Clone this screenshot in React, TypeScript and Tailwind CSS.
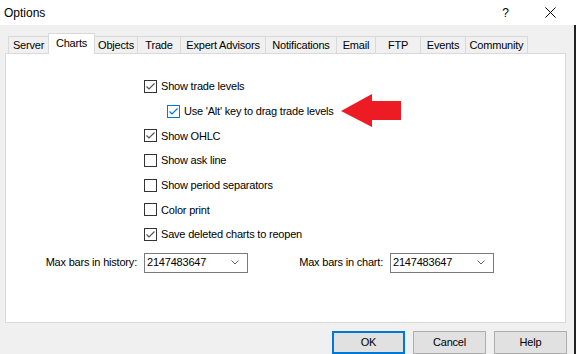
import React from "react";

const tabs = [
  { label: "Server", w: "w-[41px]" },
  { label: "Charts", w: "w-[47px]", active: true },
  { label: "Objects", w: "w-[44px]" },
  { label: "Trade", w: "w-[44px]" },
  { label: "Expert Advisors", w: "w-[86px]" },
  { label: "Notifications", w: "w-[72px]" },
  { label: "Email", w: "w-[40px]" },
  { label: "FTP", w: "w-[46px]" },
  { label: "Events", w: "w-[46px]" },
  { label: "Community", w: "w-[63px]" },
];

const options = [
  { label: "Show trade levels", checked: true },
  { label: "Use 'Alt' key to drag trade levels", checked: true, indent: true, focus: true },
  { label: "Show OHLC", checked: true },
  { label: "Show ask line", checked: false },
  { label: "Show period separators", checked: false },
  { label: "Color print", checked: false },
  { label: "Save deleted charts to reopen", checked: true },
];

function CheckBox({ checked, focus }: { checked: boolean; focus?: boolean }) {
  return (
    <div
      className={`w-[13px] h-[13px] shrink-0 bg-white border ${
        focus ? "border-[#0078d7]" : "border-[#333333]"
      }`}
    >
      {checked && (
        <svg width="11" height="11" viewBox="0 0 11 11">
          <polyline
            points="1.5,5.5 4,8 9.5,2.5"
            fill="none"
            stroke={focus ? "#0078d7" : "#555555"}
            strokeWidth="1.2"
          />
        </svg>
      )}
    </div>
  );
}

function Combo({ value }: { value: string }) {
  return (
    <div className="w-[104px] h-[20px] bg-white border border-[#7a7a7a] flex items-center pl-[2px] pr-[8px]">
      <span className="flex-1">{value}</span>
      <svg width="8" height="5" viewBox="0 0 8 5">
        <polyline points="0.5,0.5 4,4 7.5,0.5" fill="none" stroke="#606060" strokeWidth="1" />
      </svg>
    </div>
  );
}

export default function App() {
  return (
    <div className="w-[576px] h-[354px] overflow-hidden bg-[#f0f0f0] relative text-[11px] text-black font-['Liberation_Sans',Arial,sans-serif]">
      {/* Title bar */}
      <div className="h-[25px] bg-white flex items-center">
        <span className="pl-[4px] text-[12px]">Options</span>
        <span className="ml-auto text-[12px] mr-[36px]">?</span>
        <svg width="11" height="11" viewBox="0 0 11 11" className="mr-[20px]">
          <path d="M0.5 0.5 L10.5 10.5 M10.5 0.5 L0.5 10.5" stroke="#000" strokeWidth="1" />
        </svg>
      </div>

      <div className="flex h-[329px] tracking-[-0.2px]">
        <div className="w-[574px] flex flex-col">
          {/* Tabs */}
          <div className="h-[20px] mt-[8px] pl-[8px] flex items-end">
            {tabs.map((t) =>
              t.active ? (
                <div
                  key={t.label}
                  className={`${t.w} -ml-px h-[21px] -mb-px relative z-10 bg-white border border-b-0 border-[#d9d9d9] flex items-center justify-center pb-[2px]`}
                >
                  {t.label}
                </div>
              ) : (
                <div
                  key={t.label}
                  className={`${t.w} -ml-px first:ml-0 h-[17px] border border-b-0 border-[#d9d9d9] flex items-center justify-center`}
                >
                  {t.label}
                </div>
              )
            )}
          </div>

          {/* Panel */}
          <div className="ml-[5px] w-[561px] h-[273px] border border-[#d9d9d9] bg-white pt-[26px]">
            <div className="pl-[138px] flex flex-col">
              {options.map((o) => (
                <div key={o.label} className="h-[24.667px]">
                  <div className={`flex items-center h-[13px] gap-[4px] ${o.indent ? "ml-[23px]" : ""}`}>
                    <CheckBox checked={o.checked} focus={o.focus} />
                    <span>{o.label}</span>
                  </div>
                </div>
              ))}
            </div>
            <div className="flex items-center h-[20px]">
              <div className="w-[138px] text-right pr-[7px]">Max bars in history:</div>
              <Combo value="2147483647" />
              <div className="w-[142px] text-right pr-[7px]">Max bars in chart:</div>
              <Combo value="2147483647" />
            </div>
          </div>

          {/* Buttons */}
          <div className="mt-[8px] flex justify-end gap-[8px] pr-[7px]">
            <button className="w-[73px] h-[23px] bg-[#e1e1e1] border-2 border-[#0078d7] flex items-center justify-center">
              OK
            </button>
            <button className="w-[73px] h-[23px] bg-[#e1e1e1] border border-[#adadad] flex items-center justify-center">
              Cancel
            </button>
            <button className="w-[73px] h-[23px] bg-[#e1e1e1] border border-[#adadad] flex items-center justify-center">
              Help
            </button>
          </div>
        </div>
        <div className="w-[2px] bg-[#222222]" />
      </div>

      {/* Red annotation arrow */}
      <svg width="61" height="34" viewBox="0 0 61 34" className="absolute left-[341px] top-[94px]">
        <polygon points="0,17 31,0 31,7 60,7 60,26 31,26 31,33" fill="#ed1c24" />
      </svg>
    </div>
  );
}
